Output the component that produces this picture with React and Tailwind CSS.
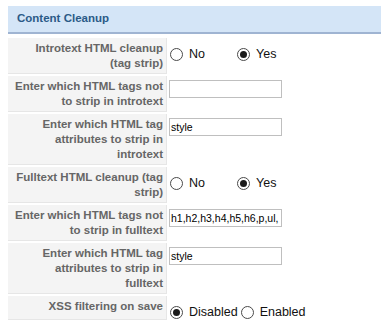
import React from "react";

const font = { fontFamily: '"Liberation Sans", Arial, sans-serif' };

function Radio({ checked }) {
  return (
    <span className="w-[13px] h-[13px] rounded-full border border-[#4a4a4a] bg-white flex items-center justify-center shrink-0">
      {checked && <span className="w-[7px] h-[7px] rounded-full bg-[#1a1a1a]" />}
    </span>
  );
}

function RadioGroup({ options, value }) {
  return (
    <div className="flex items-center pt-[9px] pl-[3px] text-[12.5px] text-[#111] leading-[15px]">
      {options.map((opt) => (
        <div key={opt} className="flex items-center mr-[3px]">
          <Radio checked={opt === value} />
          <span className="ml-[6px] min-w-[45px]">{opt}</span>
        </div>
      ))}
    </div>
  );
}

function TextField({ value }) {
  return (
    <div className="pt-[4px] pl-[2px]">
      <div className="w-[113px] h-[18px] border border-[#bfbfbf] bg-white px-[1px] overflow-hidden whitespace-nowrap text-[10.5px] leading-[16px] text-black">
        {value}
      </div>
    </div>
  );
}

function Row({ lines, children }) {
  return (
    <div className="flex">
      <div className="w-[159px] shrink-0 bg-[#f4f4f4] border-r border-b border-[#e6e6e6] text-right pr-[3px] pt-[3px] pb-[2px] text-[11.5px] leading-[15px] font-bold text-[#666]">
        {lines.map((l) => (
          <div key={l} className="whitespace-nowrap">
            {l}
          </div>
        ))}
      </div>
      <div className="flex-1">{children}</div>
    </div>
  );
}

export default function App() {
  const rows = [
    { lines: ["Introtext HTML cleanup", "(tag strip)"], radio: ["No", "Yes"], value: "Yes" },
    { lines: ["Enter which HTML tags not", "to strip in introtext"], text: "" },
    { lines: ["Enter which HTML tag", "attributes to strip in", "introtext"], text: "style" },
    { lines: ["Fulltext HTML cleanup (tag", "strip)"], radio: ["No", "Yes"], value: "Yes" },
    { lines: ["Enter which HTML tags not", "to strip in fulltext"], text: "h1,h2,h3,h4,h5,h6,p,ul," },
    { lines: ["Enter which HTML tag", "attributes to strip in", "fulltext"], text: "style" },
    { lines: ["XSS filtering on save"], radio: ["Disabled", "Enabled"], value: "Disabled" },
  ];

  return (
    <div className="w-[381px] h-[332px] bg-white overflow-hidden" style={font}>
      <div className="ml-[8px] pt-[6px]">
        <div className="h-[28px] bg-[#d4e5f7] border-b-2 border-[#9fb4d2] flex items-center pl-[9px] text-[11.5px] font-bold text-[#2b5a87]">
          Content Cleanup
        </div>
        <div className="flex flex-col gap-[2px] mt-[4px]">
          {rows.map((r) => (
            <Row key={r.lines.join(" ")} lines={r.lines}>
              {r.radio ? (
                <RadioGroup options={r.radio} value={r.value} />
              ) : (
                <TextField value={r.text} />
              )}
            </Row>
          ))}
        </div>
      </div>
    </div>
  );
}
